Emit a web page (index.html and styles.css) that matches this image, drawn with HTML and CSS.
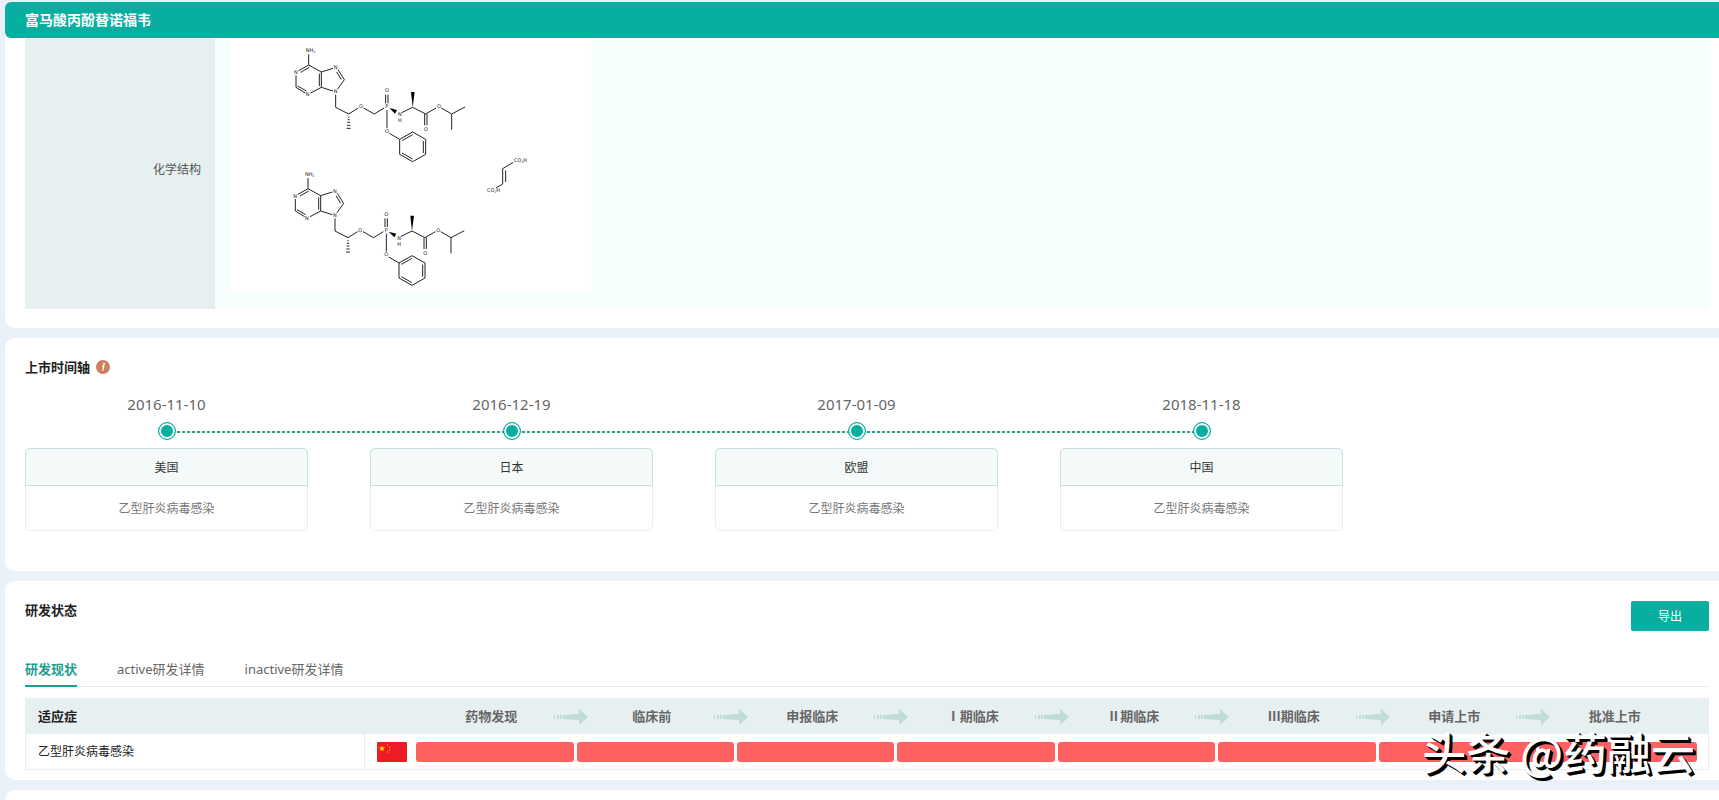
FILE: index.html
```html
<!DOCTYPE html>
<html lang="zh-CN">
<head>
  <meta charset="UTF-8">
  <meta name="viewport" content="width=device-width, initial-scale=1">
  <title>富马酸丙酚替诺福韦</title>
  <link rel="stylesheet" href="styles.css">
</head>
<body>

  <!-- 基本信息 -->
  <section class="panel panel-first">
    <h1 class="drug-name">富马酸丙酚替诺福韦</h1>
    <div class="info-row">
      <div class="info-label">化学结构</div>
      <div class="info-value">
        <svg class="structure" viewBox="0 0 1083 762" role="img" aria-label="化学结构">
          <defs>
            <g id="tenofovir">
              <path class="bond" d="M86 43V75 M86 75L56 92 M88 82L62 97 M86 75L124 96 M48 106V142 M48 142L76 159 M53 138L79 153 M92 159L124 142 M124 96V142 M118 101V138 M124 96L159 85 M174 89L193 119 M170 96L184 119 M193 119L173 147 M124 142L159 153 M167 164V202 M167 202L206 222 M206 222L235 204 M251 204L283 222 M283 222L312 204 M317 190V164 M324 190V164 M321 210V264 M365 218L398 202 M398 202L437 222 M434 222V256 M441 222V256 M437 222L468 204 M484 204L515 222 M515 222L555 201 M515 222V269 M328 280L359 298 M359 298L398 276L437 298V343L398 365L359 343Z M366 302L398 284 M430 303V339 M398 357L366 339"/>
              <path class="hash" d="M204 231H208 M203 239H209 M202 247H210 M201 256H211 M200 265H212"/>
              <path class="wedge" d="M398 202L393 156H404Z M328 204L351 210L345 221Z"/>
              <g class="atoms">
                <text x="77" y="36">NH<tspan class="sub" dy="3">2</tspan></text>
                <text x="42" y="102">N</text>
                <text x="77" y="168">N</text>
                <text x="161" y="87">N</text>
                <text x="161" y="159">N</text>
                <text x="237" y="204">O</text>
                <text x="315" y="156">O</text>
                <text x="316" y="205">P</text>
                <text x="354" y="228">N</text>
                <text x="354" y="246">H</text>
                <text x="471" y="204">O</text>
                <text x="432" y="273">O</text>
                <text x="315" y="278">O</text>
              </g>
            </g>
          </defs>
          <use href="#tenofovir" x="150" y="6"/>
          <use href="#tenofovir" x="148" y="377"/>
          <g transform="translate(150 366)">
            <path class="bond" d="M700 7L668 26V72L648 84 M677 31V66"/>
            <g class="atoms">
              <text x="702" y="6">CO<tspan class="sub" dy="3">2</tspan><tspan dy="-3">H</tspan></text>
              <text x="621" y="96">CO<tspan class="sub" dy="3">2</tspan><tspan dy="-3">H</tspan></text>
            </g>
          </g>
        </svg>
      </div>
    </div>
  </section>

  <!-- 上市时间轴 -->
  <section class="panel panel-timeline">
    <h2 class="panel-title">上市时间轴
      <svg class="icon-info" viewBox="0 0 14 14" aria-hidden="true">
        <circle cx="7" cy="7" r="7" fill="#cd7f60"/>
        <circle cx="8" cy="3.7" r="1" fill="#fff"/>
        <path d="M6 6H7.8L6.7 10.6" fill="none" stroke="#fff" stroke-width="1.3"/>
      </svg>
    </h2>
    <ol class="timeline">
      <li class="timeline-item">
        <time class="timeline-date">2016-11-10</time>
        <span class="timeline-dot"></span>
        <div class="market">
          <div class="market-name">美国</div>
          <div class="market-text">乙型肝炎病毒感染</div>
        </div>
      </li>
      <li class="timeline-item">
        <time class="timeline-date">2016-12-19</time>
        <span class="timeline-dot"></span>
        <div class="market">
          <div class="market-name">日本</div>
          <div class="market-text">乙型肝炎病毒感染</div>
        </div>
      </li>
      <li class="timeline-item">
        <time class="timeline-date">2017-01-09</time>
        <span class="timeline-dot"></span>
        <div class="market">
          <div class="market-name">欧盟</div>
          <div class="market-text">乙型肝炎病毒感染</div>
        </div>
      </li>
      <li class="timeline-item">
        <time class="timeline-date">2018-11-18</time>
        <span class="timeline-dot"></span>
        <div class="market">
          <div class="market-name">中国</div>
          <div class="market-text">乙型肝炎病毒感染</div>
        </div>
      </li>
    </ol>
  </section>

  <!-- 研发状态 -->
  <section class="panel panel-status">
    <div class="panel-head">
      <h2 class="panel-title">研发状态</h2>
      <button class="export-btn" type="button">导出</button>
    </div>

    <nav class="tabs">
      <a class="tab active" href="#now">研发现状</a>
      <a class="tab" href="#active">active研发详情</a>
      <a class="tab" href="#inactive">inactive研发详情</a>
    </nav>

    <svg width="0" height="0" class="sprite" aria-hidden="true">
      <symbol id="arrow" viewBox="0 0 34 18">
        <path d="M0 7H1V11H0Z M3 7H5V11H3Z M6 7H8V11H6Z M9 7L25 6V1L34 9L25 17V12L9 11Z" fill="#bfdcd7"/>
      </symbol>
    </svg>

    <table class="stage-table" id="now">
      <colgroup>
        <col class="col-name">
        <col class="col-flag">
        <col span="8">
        <col class="col-end">
      </colgroup>
      <thead>
        <tr>
          <th class="name" scope="col" colspan="2">适应症</th>
          <th scope="col">药物发现<svg class="arrow"><use href="#arrow"/></svg></th>
          <th scope="col">临床前<svg class="arrow"><use href="#arrow"/></svg></th>
          <th scope="col">申报临床<svg class="arrow"><use href="#arrow"/></svg></th>
          <th scope="col">Ⅰ期临床<svg class="arrow"><use href="#arrow"/></svg></th>
          <th scope="col">Ⅱ期临床<svg class="arrow"><use href="#arrow"/></svg></th>
          <th scope="col">Ⅲ期临床<svg class="arrow"><use href="#arrow"/></svg></th>
          <th scope="col">申请上市<svg class="arrow"><use href="#arrow"/></svg></th>
          <th scope="col">批准上市</th>
          <th></th>
        </tr>
      </thead>
      <tbody>
        <tr>
          <td class="name">乙型肝炎病毒感染</td>
          <td class="flag-cell">
            <svg class="flag" viewBox="0 0 30 20" role="img" aria-label="中国">
              <rect width="30" height="20" rx="1" fill="#ee1c25"/>
              <path d="M5 3.4L5.8 5.6H8L6.2 7L6.9 9.2L5 7.9L3.1 9.2L3.8 7L2 5.6H4.2Z" fill="#ffde00"/>
              <g fill="#ff9a3c">
                <circle cx="10.5" cy="3" r="0.7"/>
                <circle cx="12.7" cy="5" r="0.7"/>
                <circle cx="12.7" cy="8" r="0.7"/>
                <circle cx="10.5" cy="10" r="0.7"/>
              </g>
            </svg>
          </td>
          <td><div class="bar"></div></td>
          <td><div class="bar"></div></td>
          <td><div class="bar"></div></td>
          <td><div class="bar"></div></td>
          <td><div class="bar"></div></td>
          <td><div class="bar"></div></td>
          <td><div class="bar"></div></td>
          <td><div class="bar"></div></td>
          <td></td>
        </tr>
      </tbody>
    </table>
    <div class="watermark">头条 @药融云</div>
  </section>

  <section class="panel panel-next"></section>

</body>
</html>
```
FILE: styles.css
```css
* {
  box-sizing: border-box;
}

body {
  display: flex;
  flex-direction: column;
  gap: 10px;
  min-height: 100vh;
  margin: 0;
  padding: 2px 0 0 5px;
  background: #eaf0f7;
  color: #333;
  font-family: "Noto Sans", "Noto Sans CJK SC", sans-serif;
  font-size: 12px;
  line-height: 20px;
}

.panel {
  position: relative;
  padding: 20px 10px 20px 20px;
  background: #fff;
  border-radius: 10px 0 0 10px;
}

.panel-first {
  padding: 0 0 19px;
}

.panel-timeline {
  padding-bottom: 40px;
}

.panel-status {
  padding-bottom: 10px;
}

.panel-next {
  flex: 1;
  padding: 0;
  border-radius: 10px 0 0 0;
}

.panel-title {
  display: flex;
  align-items: center;
  gap: 6px;
  margin: 0;
  color: #222;
  font-size: 13px;
  font-weight: bold;
  line-height: 18px;
}

/* 标题 + 化学结构 */
.drug-name {
  margin: 0;
  padding: 0 20px;
  background: #08aea0;
  border-radius: 6px 0 0 6px;
  color: #fff;
  font-size: 14px;
  line-height: 36px;
}

.info-row {
  display: flex;
  margin: 0 10px 0 20px;
}

.info-label {
  display: flex;
  align-items: center;
  justify-content: flex-end;
  width: 190px;
  padding: 0 14px 8px 0;
  background: #e6f0f1;
  color: #555;
}

.info-value {
  flex: 1;
  padding: 0 15px 17px;
  background: #f7fefe;
}

.structure {
  display: block;
  width: 361px;
  height: 254px;
  background: #fff;
}

.bond {
  fill: none;
  stroke: #222;
  stroke-width: 3;
}

.hash {
  stroke: #222;
  stroke-width: 3;
}

.wedge {
  fill: #000;
}

.atoms {
  fill: #222;
  font-family: "DejaVu Sans", sans-serif;
  font-size: 15px;
}

.sub {
  font-size: 9px;
}

/* 时间轴 */
.icon-info {
  width: 14px;
  height: 14px;
}

.timeline {
  display: grid;
  grid-template-columns: repeat(4, 1fr);
  gap: 62px;
  margin: 18px 366px 0 0;
  padding: 0;
  list-style: none;
}

.timeline-item {
  position: relative;
  display: flex;
  flex-direction: column;
  align-items: center;
}

.timeline-item:not(:last-child)::after {
  content: '';
  position: absolute;
  top: 37px;
  left: 50%;
  width: calc(100% + 62px);
  height: 2px;
  background: repeating-linear-gradient(90deg, #3a9a8c 0 3px, #e0f7f4 3px 5px);
}

.timeline-date {
  color: #666;
  font-size: 15px;
  line-height: 20px;
}

.timeline-dot {
  position: relative;
  z-index: 1;
  width: 18px;
  height: 18px;
  margin: 8px 0;
  border: 1px solid #08aea0;
  border-radius: 50%;
  background: #08aea0;
  box-shadow: inset 0 0 0 2px #effcfa;
}

.market {
  width: 100%;
  border: 1px solid #e6f0f0;
  border-radius: 5px;
  text-align: center;
}

.market-name {
  margin: -1px -1px 0;
  padding-top: 2px;
  border: 1px solid #c9e0dd;
  border-radius: 5px 5px 0 0;
  background: #f4fafa;
  line-height: 34px;
}

.market-text {
  padding-top: 2px;
  color: #777;
  line-height: 42px;
}

/* 研发状态 */
.panel-head {
  display: flex;
  align-items: flex-start;
  justify-content: space-between;
}

.export-btn {
  width: 78px;
  height: 30px;
  padding: 0;
  border: 0;
  border-radius: 2px;
  background: #08aea0;
  color: #fff;
  font-family: inherit;
  font-size: 12px;
  cursor: pointer;
}

.tabs {
  display: flex;
  gap: 40px;
  margin-top: 22px;
  border-bottom: 1px solid #e4e9ed;
}

.tab {
  margin-bottom: -1px;
  border-bottom: 2px solid transparent;
  color: #666;
  font-size: 13px;
  line-height: 32px;
  text-decoration: none;
}

.tab.active {
  border-color: #1f9c90;
  color: #1f9c90;
  font-weight: bold;
}

.sprite {
  position: absolute;
}

.stage-table {
  width: 100%;
  margin-top: 11px;
  border-spacing: 0;
  table-layout: fixed;
  box-shadow: inset 0 0 0 1px #e4eef3;
}

.col-name {
  width: 339px;
}

.col-flag {
  width: 52px;
}

.col-end {
  width: 9px;
}

.stage-table th {
  position: relative;
  height: 36px;
  padding: 0 10px 0 0;
  background: #e6f0f1;
  color: #666;
  font-family: "Noto Sans CJK SC", sans-serif;
  font-size: 13px;
}

.stage-table th:last-child {
  padding: 0;
}

.stage-table td {
  height: 36px;
  padding: 0 3px 0 0;
}

.stage-table .name {
  padding-left: 13px;
  color: #222;
  text-align: left;
}

.stage-table .flag-cell {
  padding-left: 12px;
  border-left: 1px solid #e4eef3;
}

.flag {
  display: block;
  width: 30px;
  height: 20px;
}

.arrow {
  position: absolute;
  z-index: 1;
  top: 10px;
  right: -11px;
  width: 34px;
  height: 18px;
}

.bar {
  height: 20px;
  border-radius: 3px;
  background: #ff6060;
}

.watermark {
  position: absolute;
  right: 24px;
  bottom: 5px;
  z-index: 2;
  color: #fff;
  font-family: "Noto Sans CJK SC", sans-serif;
  font-size: 44px;
  font-weight: 500;
  line-height: 48px;
  text-shadow: 1px 1px 0 #000, 2px 2px 0 #000, 3px 3px 0 #000;
  white-space: nowrap;
}
```
